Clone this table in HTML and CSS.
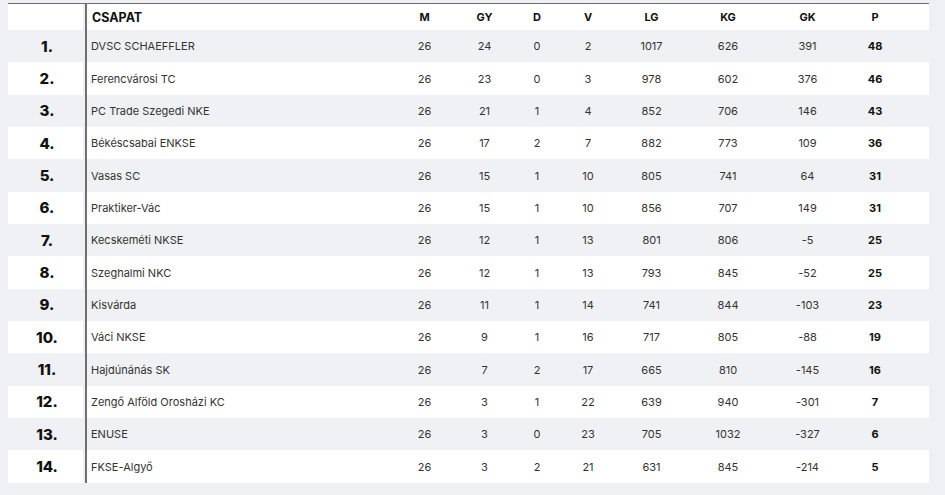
FILE: index.html
```html
<!DOCTYPE html>
<html lang="hu">
<head>
<meta charset="utf-8">
<title>Tabella</title>
<link rel="stylesheet" href="styles.css">
</head>
<body>
<div class="standings">
  <div class="row head">
    <div class="rank"></div>
    <div class="main">
      <div class="team">CSAPAT</div>
      <div class="num">M</div><div class="num">GY</div><div class="num">D</div><div class="num">V</div>
      <div class="num">LG</div><div class="num">KG</div><div class="num">GK</div><div class="num">P</div>
    </div>
  </div>
  <div class="row alt"><div class="rank">1.</div><div class="main"><div class="team">DVSC SCHAEFFLER</div><div class="num">26</div><div class="num">24</div><div class="num">0</div><div class="num">2</div><div class="num">1017</div><div class="num">626</div><div class="num">391</div><div class="num pts">48</div></div></div>
  <div class="row"><div class="rank">2.</div><div class="main"><div class="team">Ferencvárosi TC</div><div class="num">26</div><div class="num">23</div><div class="num">0</div><div class="num">3</div><div class="num">978</div><div class="num">602</div><div class="num">376</div><div class="num pts">46</div></div></div>
  <div class="row alt"><div class="rank">3.</div><div class="main"><div class="team">PC Trade Szegedi NKE</div><div class="num">26</div><div class="num">21</div><div class="num">1</div><div class="num">4</div><div class="num">852</div><div class="num">706</div><div class="num">146</div><div class="num pts">43</div></div></div>
  <div class="row"><div class="rank">4.</div><div class="main"><div class="team">Békéscsabai ENKSE</div><div class="num">26</div><div class="num">17</div><div class="num">2</div><div class="num">7</div><div class="num">882</div><div class="num">773</div><div class="num">109</div><div class="num pts">36</div></div></div>
  <div class="row alt"><div class="rank">5.</div><div class="main"><div class="team">Vasas SC</div><div class="num">26</div><div class="num">15</div><div class="num">1</div><div class="num">10</div><div class="num">805</div><div class="num">741</div><div class="num">64</div><div class="num pts">31</div></div></div>
  <div class="row"><div class="rank">6.</div><div class="main"><div class="team">Praktiker-Vác</div><div class="num">26</div><div class="num">15</div><div class="num">1</div><div class="num">10</div><div class="num">856</div><div class="num">707</div><div class="num">149</div><div class="num pts">31</div></div></div>
  <div class="row alt"><div class="rank">7.</div><div class="main"><div class="team">Kecskeméti NKSE</div><div class="num">26</div><div class="num">12</div><div class="num">1</div><div class="num">13</div><div class="num">801</div><div class="num">806</div><div class="num">-5</div><div class="num pts">25</div></div></div>
  <div class="row"><div class="rank">8.</div><div class="main"><div class="team">Szeghalmi NKC</div><div class="num">26</div><div class="num">12</div><div class="num">1</div><div class="num">13</div><div class="num">793</div><div class="num">845</div><div class="num">-52</div><div class="num pts">25</div></div></div>
  <div class="row alt"><div class="rank">9.</div><div class="main"><div class="team">Kisvárda</div><div class="num">26</div><div class="num">11</div><div class="num">1</div><div class="num">14</div><div class="num">741</div><div class="num">844</div><div class="num">-103</div><div class="num pts">23</div></div></div>
  <div class="row"><div class="rank">10.</div><div class="main"><div class="team">Váci NKSE</div><div class="num">26</div><div class="num">9</div><div class="num">1</div><div class="num">16</div><div class="num">717</div><div class="num">805</div><div class="num">-88</div><div class="num pts">19</div></div></div>
  <div class="row alt"><div class="rank">11.</div><div class="main"><div class="team">Hajdúnánás SK</div><div class="num">26</div><div class="num">7</div><div class="num">2</div><div class="num">17</div><div class="num">665</div><div class="num">810</div><div class="num">-145</div><div class="num pts">16</div></div></div>
  <div class="row"><div class="rank">12.</div><div class="main"><div class="team">Zengő Alföld Orosházi KC</div><div class="num">26</div><div class="num">3</div><div class="num">1</div><div class="num">22</div><div class="num">639</div><div class="num">940</div><div class="num">-301</div><div class="num pts">7</div></div></div>
  <div class="row alt"><div class="rank">13.</div><div class="main"><div class="team">ENUSE</div><div class="num">26</div><div class="num">3</div><div class="num">0</div><div class="num">23</div><div class="num">705</div><div class="num">1032</div><div class="num">-327</div><div class="num pts">6</div></div></div>
  <div class="row"><div class="rank">14.</div><div class="main"><div class="team">FKSE-Algyő</div><div class="num">26</div><div class="num">3</div><div class="num">2</div><div class="num">21</div><div class="num">631</div><div class="num">845</div><div class="num">-214</div><div class="num pts">5</div></div></div>
</div>
</body>
</html>
```
FILE: styles.css
```css
html, body {
  margin: 0;
  padding: 0;
  background: #eef0f3;
}
body {
  font-family: Inter, "Liberation Sans", sans-serif;
  color: #333333;
}
.standings {
  margin: 3px 0 0 8px;
  width: 921px;
  border-top: 1px solid #6f6f6f;
}
.row {
  display: grid;
  grid-template-columns: 75px 1fr;
  column-gap: 2px;
  height: 32.357px;
}
.row.head {
  height: 26px;
}
.rank, .main {
  background: #ffffff;
}
.row.alt .rank, .row.alt .main {
  background: #eff1f4;
}
.rank {
  display: flex;
  align-items: center;
  justify-content: center;
  font-size: 15px;
  font-weight: 800;
  color: #111;
  padding-left: 3px;
}
.main {
  border-left: 2px solid #6f6f6f;
  display: grid;
  grid-template-columns: 307px 61px 59px 46px 56px 71px 82px 77px 58px;
  padding-right: 25px;
  align-items: center;
  font-size: 11px;
}
.team {
  padding-left: 4px;
}
.num {
  text-align: center;
}
.head .main {
  font-weight: 700;
  color: #111;
}
.head .team {
  font-size: 12.5px;
  padding-left: 5px;
}
.pts {
  font-weight: 700;
  color: #111;
}
```
